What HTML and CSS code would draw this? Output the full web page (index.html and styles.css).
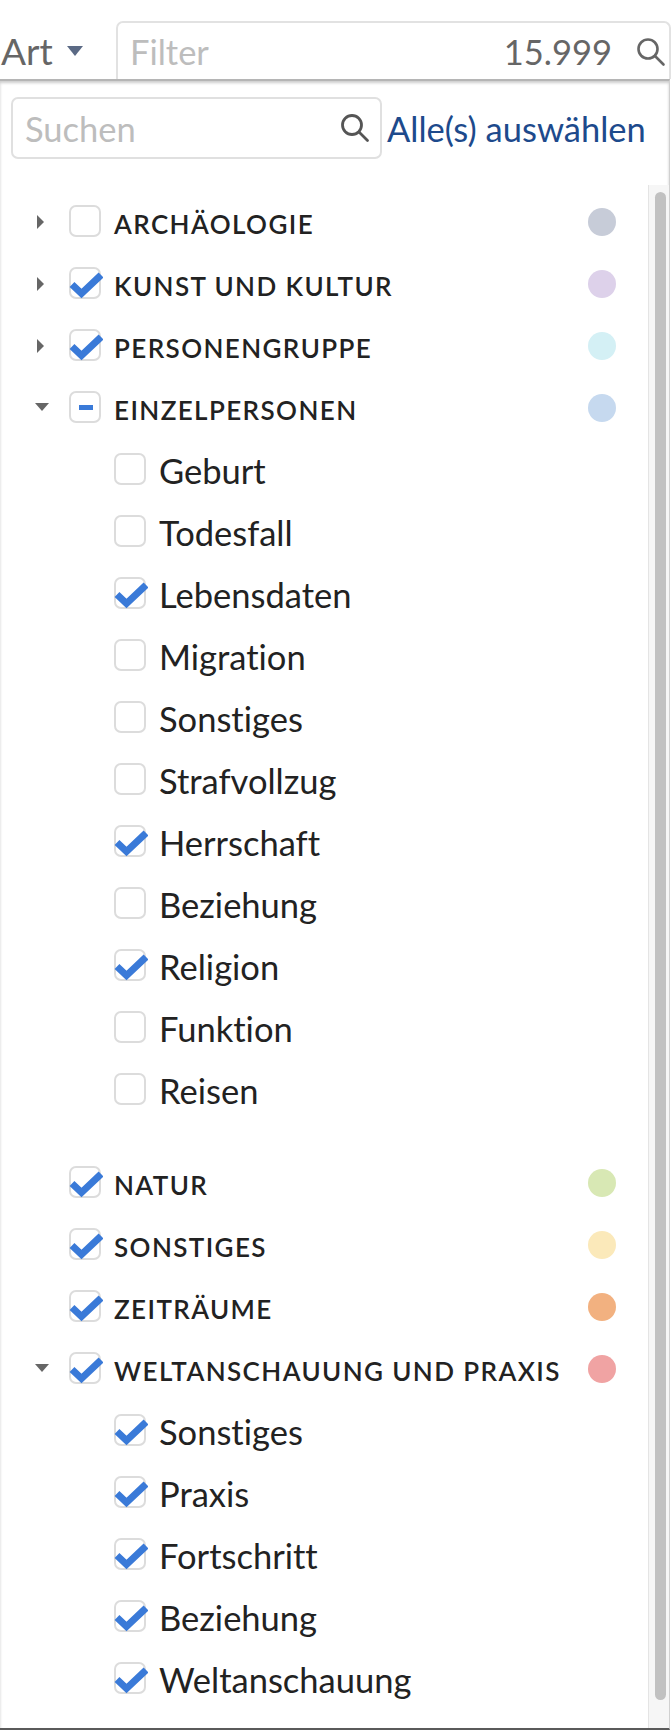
FILE: index.html
```html
<!DOCTYPE html>
<html>
<head>
	<meta charset="utf-8">
	<title>Art – Filter</title>
	<link rel="stylesheet" href="styles.css">
</head>
<body>
<svg class="defs" width="0" height="0">
	<symbol id="box" viewBox="0 0 34 34"><rect x="1" y="1" width="30" height="30" rx="6" ry="6"/></symbol>
	<symbol id="tick" viewBox="0 0 34 34"><polyline points="3,17.5 12.5,26.5 32,8"/></symbol>
	<symbol id="loupe" viewBox="0 0 30 30"><circle cx="12" cy="12" r="9.5"/><line x1="19" y1="19" x2="27.5" y2="27.5"/></symbol>
</svg>

<div class="topbar">
	<div class="type-select">Art<span class="caret"></span></div>
	<div class="filter">
		<span class="placeholder">Filter</span>
		<span class="count">15.999</span>
		<svg class="loupe"><use href="#loupe"/></svg>
	</div>
</div>

<div class="panel">
	<div class="panel-head">
		<div class="search">
			<span class="placeholder">Suchen</span>
			<svg class="loupe"><use href="#loupe"/></svg>
		</div>
		<a class="select-all">Alle(s) auswählen</a>
	</div>

	<div class="tree-scroll">
		<ul class="tree">
			<li>
				<div class="row top"><span class="toggle closed"></span><svg class="cb"><use href="#box"/></svg><span class="label">ARCHÄOLOGIE</span><span class="dot c-arch"></span></div>
			</li>
			<li>
				<div class="row top"><span class="toggle closed"></span><svg class="cb on"><use href="#box"/><use class="tk" href="#tick"/></svg><span class="label">KUNST UND KULTUR</span><span class="dot c-kunst"></span></div>
			</li>
			<li>
				<div class="row top"><span class="toggle closed"></span><svg class="cb on"><use href="#box"/><use class="tk" href="#tick"/></svg><span class="label">PERSONENGRUPPE</span><span class="dot c-gruppe"></span></div>
			</li>
			<li>
				<div class="row top"><span class="toggle open"></span><svg class="cb"><use href="#box"/><rect class="dash" x="10" y="14" width="14" height="5"/></svg><span class="label">EINZELPERSONEN</span><span class="dot c-einzel"></span></div>
				<ul class="sub">
					<li class="row"><svg class="cb"><use href="#box"/></svg><span class="label">Geburt</span></li>
					<li class="row"><svg class="cb"><use href="#box"/></svg><span class="label">Todesfall</span></li>
					<li class="row"><svg class="cb on"><use href="#box"/><use class="tk" href="#tick"/></svg><span class="label">Lebensdaten</span></li>
					<li class="row"><svg class="cb"><use href="#box"/></svg><span class="label">Migration</span></li>
					<li class="row"><svg class="cb"><use href="#box"/></svg><span class="label">Sonstiges</span></li>
					<li class="row"><svg class="cb"><use href="#box"/></svg><span class="label">Strafvollzug</span></li>
					<li class="row"><svg class="cb on"><use href="#box"/><use class="tk" href="#tick"/></svg><span class="label">Herrschaft</span></li>
					<li class="row"><svg class="cb"><use href="#box"/></svg><span class="label">Beziehung</span></li>
					<li class="row"><svg class="cb on"><use href="#box"/><use class="tk" href="#tick"/></svg><span class="label">Religion</span></li>
					<li class="row"><svg class="cb"><use href="#box"/></svg><span class="label">Funktion</span></li>
					<li class="row"><svg class="cb"><use href="#box"/></svg><span class="label">Reisen</span></li>
				</ul>
			</li>
			<li>
				<div class="row top"><span class="toggle"></span><svg class="cb on"><use href="#box"/><use class="tk" href="#tick"/></svg><span class="label">NATUR</span><span class="dot c-natur"></span></div>
			</li>
			<li>
				<div class="row top"><span class="toggle"></span><svg class="cb on"><use href="#box"/><use class="tk" href="#tick"/></svg><span class="label">SONSTIGES</span><span class="dot c-sonst"></span></div>
			</li>
			<li>
				<div class="row top"><span class="toggle"></span><svg class="cb on"><use href="#box"/><use class="tk" href="#tick"/></svg><span class="label">ZEITRÄUME</span><span class="dot c-zeit"></span></div>
			</li>
			<li>
				<div class="row top"><span class="toggle open"></span><svg class="cb on"><use href="#box"/><use class="tk" href="#tick"/></svg><span class="label">WELTANSCHAUUNG UND PRAXIS</span><span class="dot c-welt"></span></div>
				<ul class="sub">
					<li class="row"><svg class="cb on"><use href="#box"/><use class="tk" href="#tick"/></svg><span class="label">Sonstiges</span></li>
					<li class="row"><svg class="cb on"><use href="#box"/><use class="tk" href="#tick"/></svg><span class="label">Praxis</span></li>
					<li class="row"><svg class="cb on"><use href="#box"/><use class="tk" href="#tick"/></svg><span class="label">Fortschritt</span></li>
					<li class="row"><svg class="cb on"><use href="#box"/><use class="tk" href="#tick"/></svg><span class="label">Beziehung</span></li>
					<li class="row"><svg class="cb on"><use href="#box"/><use class="tk" href="#tick"/></svg><span class="label">Weltanschauung</span></li>
				</ul>
			</li>
		</ul>
		<div class="scrollbar"><div class="thumb"></div></div>
	</div>
</div>
</body>
</html>
```

FILE: styles.css
```css
html,body{margin:0;padding:0;background:#fff;}
body{font-family:Lato,"Open Sans",sans-serif;font-size:34.5px;color:#222;overflow:hidden;font-variant-ligatures:none;}
ul{list-style-type:none;margin:0;padding:0;}
.defs{position:absolute;width:0;height:0;}

/* top bar */
.topbar{display:flex;align-items:flex-start;height:79px;padding-top:21px;box-sizing:border-box;}
.type-select{display:flex;align-items:center;width:116px;height:58px;padding-left:1px;box-sizing:border-box;color:#666;font-size:37px;}
.caret{width:0;height:0;margin-left:14px;margin-top:2px;border-left:8.5px solid transparent;border-right:8.5px solid transparent;border-top:10px solid #5b6a85;}
.filter{flex:1;display:flex;align-items:center;height:58px;margin-right:1px;padding:0 3px 0 12px;border:2px solid #e2e2e2;border-bottom:0;border-radius:7px 7px 0 0;box-sizing:border-box;}
.filter .placeholder{flex:1;color:#bdbdbd;}
.filter .count{color:#666;margin-right:24px;}
.loupe{width:30px;height:30px;fill:none;stroke:#666;stroke-width:2.6;stroke-linecap:round;}
.filter .loupe{margin-top:2px;}

/* dropdown panel */
.panel{position:relative;border-top:2px solid #b5b5b5;border-right:1px solid #d0d0d0;border-bottom:2px solid #5a5a5a;width:670px;box-sizing:border-box;box-shadow:inset 0 2px 3px rgba(0,0,0,.2);}
.panel-head{display:flex;align-items:center;gap:5px;padding:16px 0 26px 11px;}
.search{display:flex;align-items:center;width:371px;height:62px;padding:0 10px 0 12px;border:2px solid #e0e0e0;border-radius:7px;box-sizing:border-box;}
.search .placeholder{flex:1;color:#bdbdbd;}
.search .loupe{stroke:#555;stroke-width:2.8;}
.select-all{color:#1d4a8c;cursor:pointer;white-space:nowrap;}

/* tree with its scrollbar */
.tree-scroll{display:flex;height:1543px;overflow:hidden;}
.tree{flex:1;padding:6px 0 8px;}
.scrollbar{width:21px;flex:none;box-sizing:border-box;padding:7px 3px 0 6px;background:#f6f6f6;border-left:1px solid #e4e4e4;}
.thumb{height:1508px;background:#c1c1c1;border-radius:6px;}
.row{display:flex;align-items:center;height:62px;}
.row.top{padding-left:30px;}
.sub{padding-bottom:31px;}
.sub .row{padding-left:114px;}
.toggle{display:flex;justify-content:center;align-items:center;width:24px;height:24px;margin-right:15px;}
.toggle.closed::before{content:"";border-top:7px solid transparent;border-bottom:7px solid transparent;border-left:7px solid #666;margin-left:-4px;}
.toggle.open::before{content:"";border-left:7.5px solid transparent;border-right:7.5px solid transparent;border-top:8px solid #666;margin-top:-2px;}
.cb{width:34px;height:34px;flex:none;overflow:visible;margin-right:11px;}
.cb use{fill:#fff;stroke:#dcdcdc;stroke-width:2;}
.cb .tk{fill:none;stroke:#3a7ad8;stroke-width:7;stroke-linejoin:miter;stroke-linecap:butt;}
.cb .dash{fill:#3a7ad8;}
.label{flex:1;white-space:nowrap;}
.top .label{padding-top:4px;font-size:26px;font-weight:600;letter-spacing:1.4px;color:#222;}
.dot{width:28px;height:28px;border-radius:50%;margin-right:32px;flex:none;}
.c-arch{background:#c7ccd8;}
.c-kunst{background:#ddd1ea;}
.c-gruppe{background:#d4f0f5;}
.c-einzel{background:#c6d9ef;}
.c-natur{background:#d8e8b4;}
.c-sonst{background:#fbe9ba;}
.c-zeit{background:#f2b180;}
.c-welt{background:#f0a3a3;}
```
